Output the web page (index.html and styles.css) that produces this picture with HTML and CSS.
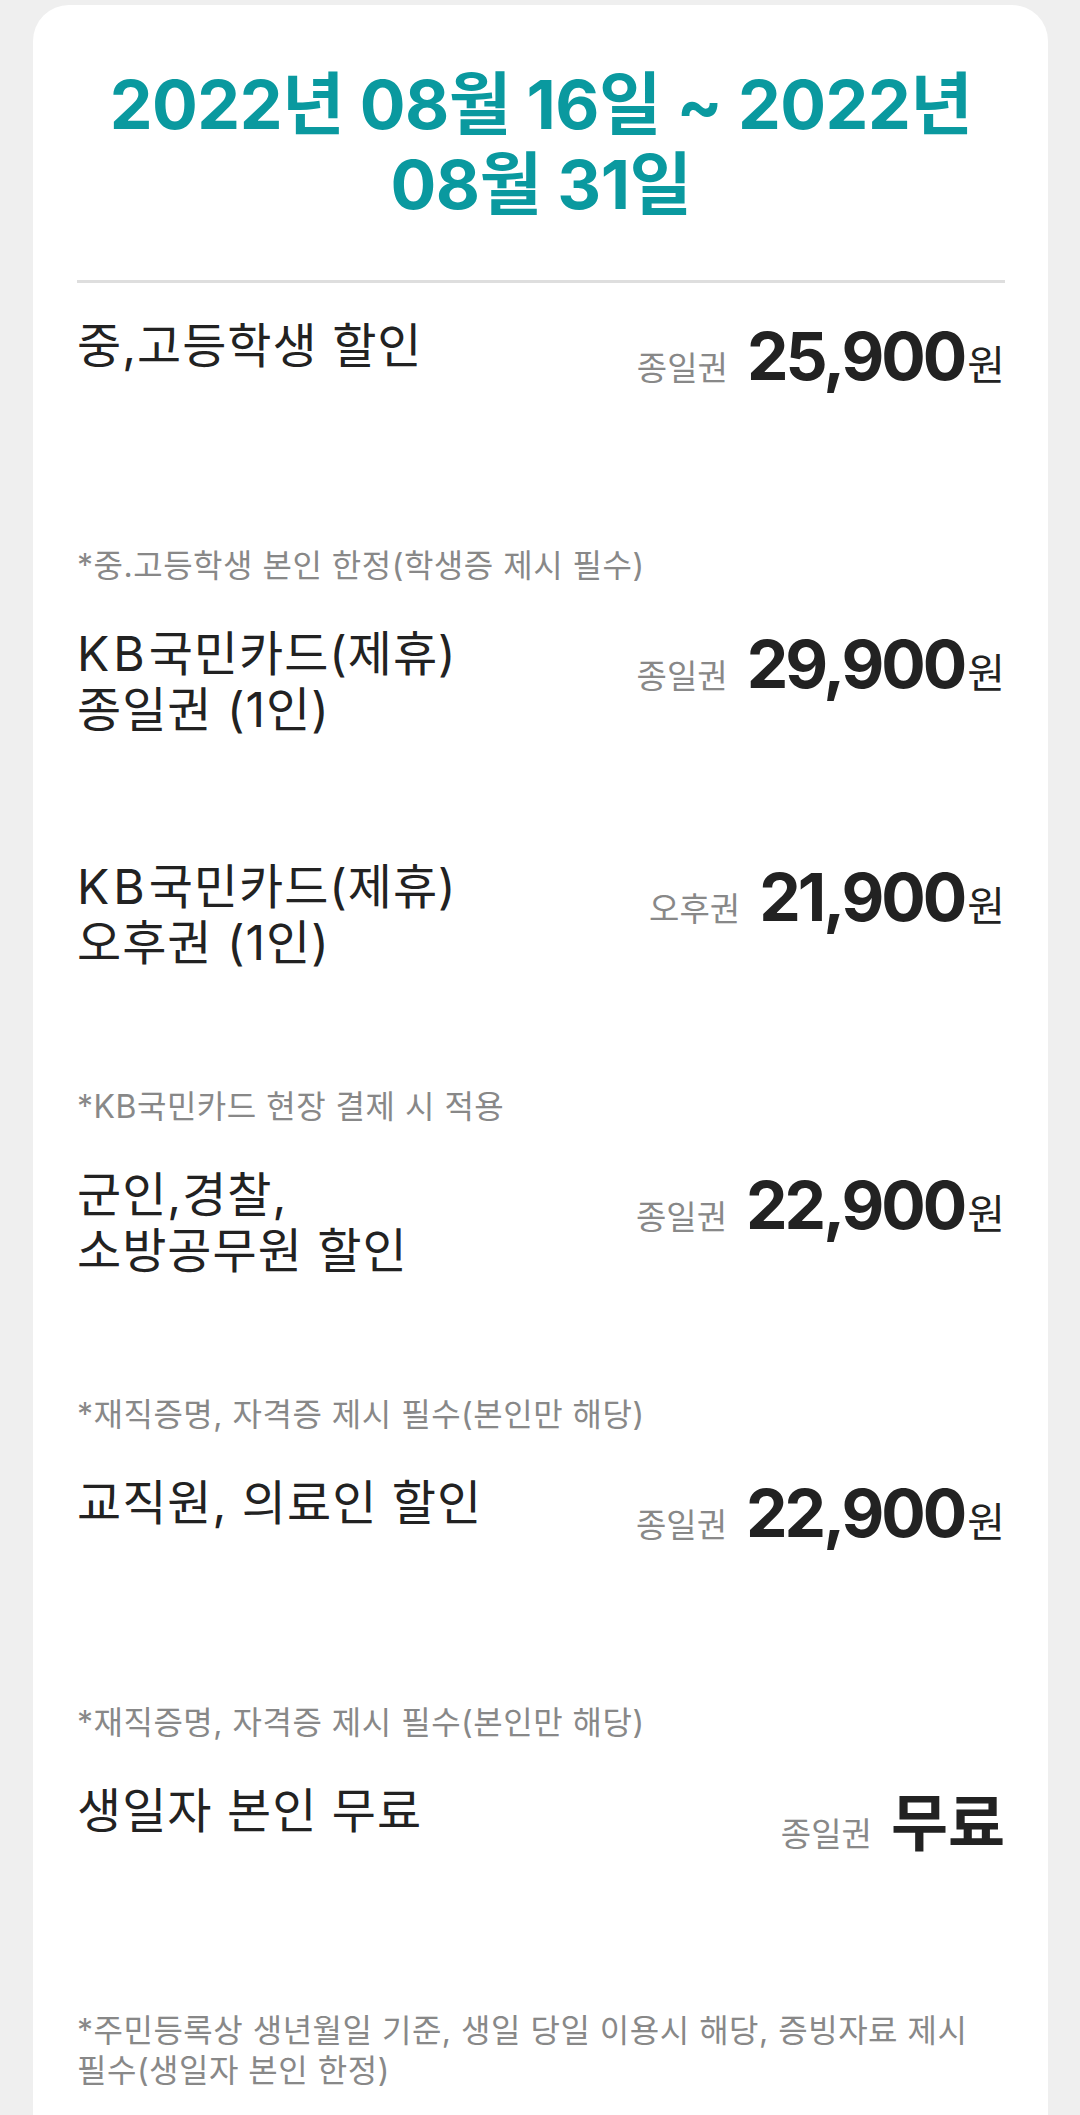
FILE: index.html
```html
<!DOCTYPE html>
<html lang="ko">
<head>
<meta charset="utf-8">
<title>요금 안내</title>
<link rel="stylesheet" href="styles.css">
</head>
<body>
<div class="card">
  <h1 class="period">2022년 08월 16일 ~ 2022년 08월 31일</h1>
  <div class="divider"></div>
  <div class="list">
    <div class="item">
      <div class="row">
        <div class="row-title">중,고등학생 할인</div>
        <div class="price"><span class="label">종일권</span><span class="amount">25,900</span><span class="won">원</span></div>
      </div>
      <div class="note">*중.고등학생 본인 한정(학생증 제시 필수)</div>
    </div>
    <div class="item">
      <div class="row">
        <div class="row-title"><span class="latin">KB</span>국민카드(제휴)<br>종일권 (1인)</div>
        <div class="price"><span class="label">종일권</span><span class="amount">29,900</span><span class="won">원</span></div>
      </div>
    </div>
    <div class="item">
      <div class="row">
        <div class="row-title"><span class="latin">KB</span>국민카드(제휴)<br>오후권 (1인)</div>
        <div class="price"><span class="label">오후권</span><span class="amount">21,900</span><span class="won">원</span></div>
      </div>
      <div class="note">*KB국민카드 현장 결제 시 적용</div>
    </div>
    <div class="item">
      <div class="row">
        <div class="row-title">군인,경찰,<br>소방공무원 할인</div>
        <div class="price"><span class="label">종일권</span><span class="amount">22,900</span><span class="won">원</span></div>
      </div>
      <div class="note">*재직증명, 자격증 제시 필수(본인만 해당)</div>
    </div>
    <div class="item">
      <div class="row">
        <div class="row-title">교직원, 의료인 할인</div>
        <div class="price"><span class="label">종일권</span><span class="amount">22,900</span><span class="won">원</span></div>
      </div>
      <div class="note">*재직증명, 자격증 제시 필수(본인만 해당)</div>
    </div>
    <div class="item">
      <div class="row">
        <div class="row-title">생일자 본인 무료</div>
        <div class="price"><span class="label">종일권</span><span class="amount free">무료</span></div>
      </div>
      <div class="note">*주민등록상 생년월일 기준, 생일 당일 이용시 해당, 증빙자료 제시 필수(생일자 본인 한정)</div>
    </div>
  </div>
</div>
</body>
</html>
```

FILE: styles.css
```css
html, body {
  margin: 0;
  padding: 0;
}
body {
  background: #efefef;
  font-family: "Inter", "Noto Sans CJK KR", sans-serif;
  color: #222;
}
.card {
  margin: 5px 32px 0 33px;
  background: #fff;
  border-radius: 36px 36px 0 0;
  padding: 59px 43px 60px 44px;
}
.period {
  margin: 0;
  font-family: "Inter", "Noto Sans CJK KR", sans-serif;
  font-weight: 700;
  font-size: 68px;
  line-height: 80px;
  color: #0a999f;
  text-align: center;
  letter-spacing: -0.5px;
}
.divider {
  height: 3px;
  background: #dedede;
  margin-top: 56px;
}
.list {
  margin-top: 35px;
}
.item {
  margin-bottom: 5px;
}
.row {
  display: flex;
  justify-content: space-between;
  align-items: flex-start;
  min-height: 228px;
}
.row-title {
  font-size: 48px;
  line-height: 56px;
  font-weight: 400;
  letter-spacing: 1px;
  color: #222;
}
.latin {
  letter-spacing: 4px;
}
.price {
  display: flex;
  align-items: baseline;
  margin-top: 5px;
  white-space: nowrap;
}
.label {
  font-size: 33px;
  color: #888;
  margin-right: 19px;
}
.amount {
  font-family: "Inter", sans-serif;
  font-weight: 700;
  font-size: 66px;
  line-height: 1;
  letter-spacing: -3px;
  color: #222;
}
.amount.free {
  font-family: "Noto Sans CJK KR", sans-serif;
  font-size: 62px;
  letter-spacing: 0;
}
.won {
  font-family: "Noto Sans CJK KR", sans-serif;
  font-size: 41px;
  margin-left: 3px;
  color: #222;
}
.note {
  font-size: 32px;
  line-height: 40px;
  letter-spacing: 0.5px;
  color: #888;
  word-break: keep-all;
  padding-bottom: 35px;
}
```
